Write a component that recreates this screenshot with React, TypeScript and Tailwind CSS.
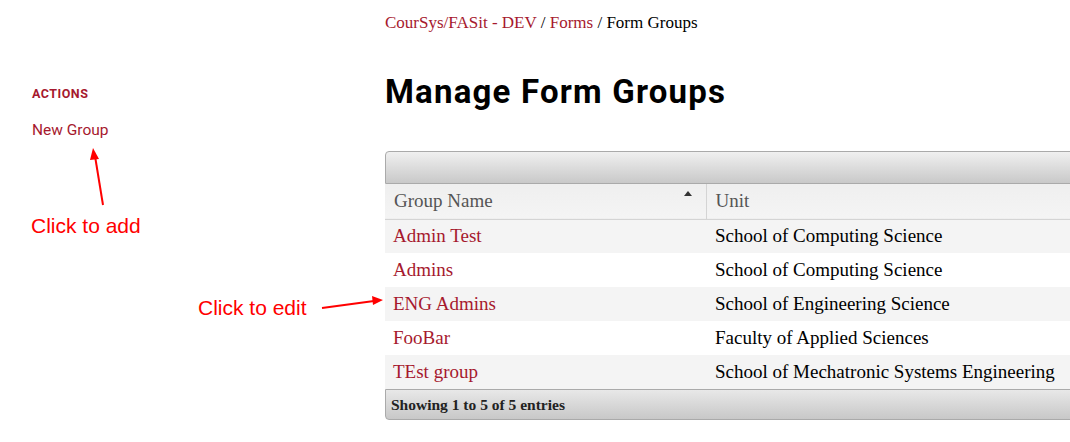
const rows = [
  { name: 'Admin Test', unit: 'School of Computing Science' },
  { name: 'Admins', unit: 'School of Computing Science' },
  { name: 'ENG Admins', unit: 'School of Engineering Science' },
  { name: 'FooBar', unit: 'Faculty of Applied Sciences' },
  { name: 'TEst group', unit: 'School of Mechatronic Systems Engineering' },
];

const serif = "font-['Liberation_Serif',serif]";

export default function App() {
  return (
    <div className="relative w-[1070px] h-[442px] overflow-hidden bg-white flex">
      {/* sidebar */}
      <aside className="w-[385px] shrink-0 pl-8 pt-[87px] font-['Roboto',sans-serif]">
        <h3 className="text-[12.5px] font-bold tracking-[0.5px] text-[#a6192e] leading-[14px]">ACTIONS</h3>
        <a href="#" className="block mt-[20px] text-[15.5px] leading-[18px] text-[#a6192e]">New Group</a>
      </aside>

      {/* main */}
      <main className="w-[760px] shrink-0 pt-[12px]">
        <nav className={`${serif} text-[17px] leading-[22px] text-black`}>
          <a href="#" className="text-[#a6192e]">CourSys/FASit - DEV</a>
          <span> / </span>
          <a href="#" className="text-[#a6192e]">Forms</a>
          <span> / Form Groups</span>
        </nav>
        <h1 className="mt-[38px] font-['Roboto',sans-serif] font-bold text-[33px] tracking-[1.2px] leading-[40px] text-black">
          Manage Form Groups
        </h1>

        <div className={`mt-[39px] ${serif}`}>
          <div className="h-[33px] rounded-tl-[4px] border border-[#aaa] bg-gradient-to-b from-[#f0f0f0] to-[#c9c9c9]" />
          <table className="w-full border-collapse text-[19px]">
            <thead>
              <tr className="h-[35px] bg-gradient-to-b from-[#efefef] to-[#f4f4f4] border-b border-[#d4d4d4] text-[#555]">
                <th className="w-[321px] text-left font-normal pl-[9px] border-r border-[#d4d4d4] relative">
                  Group Name
                  <span className="absolute right-[14px] top-[7px] w-0 h-0 border-l-[4px] border-r-[4px] border-b-[5px] border-l-transparent border-r-transparent border-b-[#333]" />
                </th>
                <th className="text-left font-normal pl-[9px]">Unit</th>
              </tr>
            </thead>
            <tbody>
              {rows.map((r, i) => (
                <tr key={r.name} className={`h-[34px] ${i % 2 === 0 ? 'bg-[#f4f4f4]' : 'bg-white'}`}>
                  <td className="pl-[8px]">
                    <a href="#" className="text-[#a6192e]">{r.name}</a>
                  </td>
                  <td className="pl-[9px] text-black whitespace-nowrap">{r.unit}</td>
                </tr>
              ))}
            </tbody>
          </table>
          <div className="h-[31px] rounded-bl-[4px] border border-[#aaa] bg-gradient-to-b from-[#e8e8e8] to-[#c8c8c8] flex items-center pl-[5px] text-[15.5px] font-bold text-[#222]">
            Showing 1 to 5 of 5 entries
          </div>
        </div>
      </main>

      {/* annotations */}
      <svg className="absolute left-0 top-0 pointer-events-none" width="1070" height="442">
        <line x1="103" y1="205" x2="95" y2="156" stroke="#ff0000" strokeWidth="2" />
        <polygon points="93,148 90,160 99,159" fill="#ff0000" />
        <line x1="322" y1="308" x2="374" y2="301" stroke="#ff0000" strokeWidth="2" />
        <polygon points="383,300 372,296 373,305" fill="#ff0000" />
      </svg>
      <span className="absolute left-[31px] top-[213px] font-['Liberation_Sans',sans-serif] text-[21px] leading-[26px] text-[#ff0000]">
        Click to add
      </span>
      <span className="absolute left-[198px] top-[295px] font-['Liberation_Sans',sans-serif] text-[21px] leading-[26px] text-[#ff0000]">
        Click to edit
      </span>
    </div>
  );
}
